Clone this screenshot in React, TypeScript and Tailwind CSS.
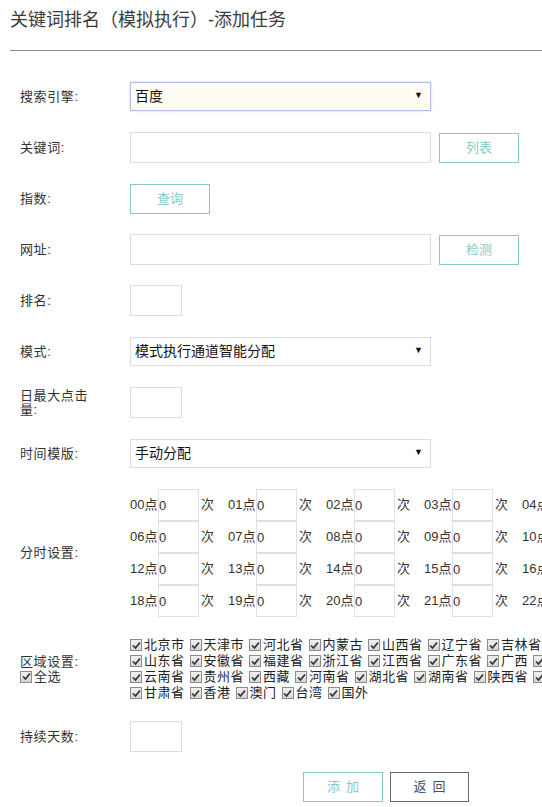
import { useState } from 'react'

const font = 'font-["Liberation_Sans","Noto_Sans_CJK_SC",sans-serif]'

const regionRows = [
  ['北京市', '天津市', '河北省', '内蒙古', '山西省', '辽宁省', '吉林省', '黑龙江省', '上海市', '江苏省'],
  ['山东省', '安徽省', '福建省', '浙江省', '江西省', '广东省', '广西', '海南省', '重庆市', '四川省'],
  ['云南省', '贵州省', '西藏', '河南省', '湖北省', '湖南省', '陕西省', '青海省', '宁夏', '新疆'],
  ['甘肃省', '香港', '澳门', '台湾', '国外'],
]

const hours = Array.from({ length: 24 }, (_, i) => String(i).padStart(2, '0'))

function Check() {
  return (
    <span className="inline-flex w-[12px] h-[12px] shrink-0 items-center justify-center border border-[#8c8c8c] bg-gradient-to-b from-[#f0f0f0] to-[#d6d6d6]">
      <svg width="9" height="9" viewBox="0 0 9 9">
        <path d="M1 4.5 L3.5 7 L8 1.5" fill="none" stroke="#333" strokeWidth="1.7" />
      </svg>
    </span>
  )
}

function Row({ label, children, className = '' }: { label: React.ReactNode; children: React.ReactNode; className?: string }) {
  return (
    <div className={`flex items-center pl-[20px] mb-[20px] ${className}`}>
      <div className="w-[75px] mr-[35px] shrink-0 text-[13px] leading-[14px] tracking-[0.6px] text-[#333]">{label}</div>
      {children}
    </div>
  )
}

function Select({ value, focus }: { value: string; focus?: boolean }) {
  return (
    <div className="relative">
      <select
        defaultValue={value}
        className={`appearance-none w-[301px] h-[29px] pl-[4px] text-[14px] text-[#111] outline-none border ${
          focus ? 'border-[#a9c3e6] bg-[#fffdf3] shadow-[0_0_2px_rgba(120,160,220,0.5)]' : 'border-[#dcdcdc] bg-white'
        }`}
      >
        <option>{value}</option>
      </select>
      <span className="absolute right-[8px] top-[9px] text-[9px] leading-none text-[#111] pointer-events-none">▼</span>
    </div>
  )
}

function Btn({ children, className = '' }: { children: React.ReactNode; className?: string }) {
  return (
    <button className={`w-[80px] h-[30px] border border-[#86c9c9] bg-white text-[13px] text-[#86c9c9] ${className}`}>
      {children}
    </button>
  )
}

export default function App() {
  const [days, setDays] = useState('')
  return (
    <div className={`w-[542px] min-h-[807px] overflow-hidden bg-white text-[#333] ${font}`}>
      <h1 className="pl-[10px] pt-[8px] text-[18px] leading-[24px] font-normal text-[#3a3a3a]">关键词排名（模拟执行）-添加任务</h1>
      <div className="ml-[10px] mt-[18px] h-px bg-[#8a8a8a]" />

      <div className="pt-[30px]">
        <Row label="搜索引擎:" className="h-[31px]">
          <Select value="百度" focus />
        </Row>

        <Row label="关键词:" className="h-[31px]">
          <input className="w-[301px] h-[31px] border border-[#dcdcdc] outline-none" />
          <Btn className="ml-[8px]">列表</Btn>
        </Row>

        <Row label="指数:" className="h-[31px]">
          <Btn>查询</Btn>
        </Row>

        <Row label="网址:" className="h-[31px]">
          <input className="w-[301px] h-[31px] border border-[#dcdcdc] outline-none" />
          <Btn className="ml-[8px]">检测</Btn>
        </Row>

        <Row label="排名:" className="h-[31px]">
          <input className="w-[52px] h-[31px] border border-[#dcdcdc] outline-none" />
        </Row>

        <Row label="模式:" className="h-[31px]">
          <Select value="模式执行通道智能分配" />
        </Row>

        <Row label="日最大点击量:" className="h-[31px]">
          <input className="w-[52px] h-[31px] border border-[#dcdcdc] outline-none" />
        </Row>

        <Row label="时间模版:" className="h-[31px]">
          <Select value="手动分配" />
        </Row>

        <Row label="分时设置:">
          <div className="flex flex-col shrink-0">
            {[0, 1, 2, 3].map((r) => (
              <div key={r} className="flex h-[32px] items-center">
                {hours.slice(r * 6, r * 6 + 6).map((h) => (
                  <div key={h} className="flex items-center w-[98px] shrink-0 text-[13px] text-[#333]">
                    <span className="w-[28px]">{h}点</span>
                    <input
                      defaultValue="0"
                      className="w-[41px] h-[32px] pl-0 border border-[#e0e0e0] text-[13px] outline-none"
                    />
                    <span className="ml-[2px]">次</span>
                  </div>
                ))}
              </div>
            ))}
          </div>
        </Row>

        <Row
          label={
            <div className="leading-[15px]">
              <div>区域设置:</div>
              <div className="flex items-center gap-[2px]">
                <Check />
                <span>全选</span>
              </div>
            </div>
          }
        >
          <div className="flex flex-col shrink-0 text-[13px] tracking-[0.5px] text-[#222]">
            {regionRows.map((row, i) => (
              <div key={i} className="flex h-[16px] items-center whitespace-nowrap">
                {row.map((name) => (
                  <label key={name} className="flex items-center shrink-0 mr-[5px]">
                    <Check />
                    <span className="ml-[2px]">{name}</span>
                  </label>
                ))}
              </div>
            ))}
          </div>
        </Row>

        <Row label="持续天数:" className="h-[31px]">
          <input
            value={days}
            onChange={(e) => setDays(e.target.value)}
            className="w-[52px] h-[31px] border border-[#dcdcdc] outline-none"
          />
        </Row>

        <div className="flex gap-[7px] pl-[303px] pb-[4px]">
          <Btn className="tracking-[6px] pl-[6px]">添加</Btn>
          <button className="w-[79px] h-[30px] border border-[#5b6b7b] bg-white text-[13px] text-[#3f5060] tracking-[6px] pl-[6px]">
            返回
          </button>
        </div>
      </div>
    </div>
  )
}
